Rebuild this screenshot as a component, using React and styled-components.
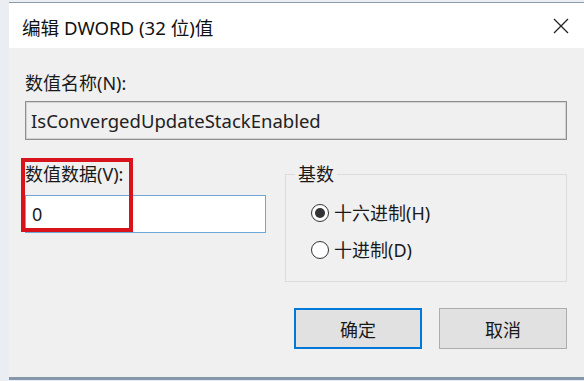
import React from "react";
import styled, { createGlobalStyle } from "styled-components";

const GlobalStyle = createGlobalStyle`
  html, body {
    margin: 0;
    padding: 0;
  }
  body {
    background: #eaeef2;
    font-family: "Noto Sans", "Noto Sans CJK SC", sans-serif;
    font-size: 18px;
    color: #1a1a1a;
    overflow: hidden;
  }
`;

const Window = styled.div`
  margin: 2px 0 0 9px;
  background: #f0f0f0;
  border-top: 1px solid #8e9cae;
  border-bottom: 3px solid #8797ab;
`;

const TitleBar = styled.div`
  height: 45px;
  background: #fff;
  display: flex;
  align-items: center;
  justify-content: space-between;
  padding: 0 15px 0 13px;
`;

const Title = styled.div`
  white-space: nowrap;
  color: #111;
  font-size: 18.6px;
  padding-top: 2px;
`;

const CloseButton = styled.span`
  display: flex;
  width: 16px;
  height: 16px;
`;

const Body = styled.div`
  padding: 23px 17px 28px 16px;
`;

const Label = styled.div`
  height: 24px;
  line-height: 24px;
  white-space: nowrap;
`;

const ReadOnlyField = styled.div`
  margin-top: 6px;
  height: 39px;
  box-sizing: border-box;
  border: 1px solid #8f8f8f;
  box-shadow: inset 0 0 0 1px #d2d2d2;
  background: #f0f0f0;
  padding: 0 5px;
  display: flex;
  align-items: center;
  color: #222;
  font-size: 18.5px;
`;

const DataRow = styled.div`
  margin-top: 22px;
  display: grid;
  grid-template-columns: 241px 282px;
  column-gap: 19px;
  align-items: start;
`;

const ValueColumn = styled.div`
  position: relative;
`;

const ValueInput = styled.input`
  display: block;
  margin-top: 9px;
  width: 100%;
  height: 38px;
  box-sizing: border-box;
  border: 1px solid #6ea6d8;
  background: #fff;
  padding: 0 6px;
  font: inherit;
  color: #1a1a1a;
  outline: none;
`;

const Highlight = styled.div`
  position: absolute;
  left: -4px;
  top: -4px;
  width: 112px;
  height: 74px;
  box-sizing: border-box;
  border: 4px solid #d8131c;
  pointer-events: none;
`;

const RadixGroup = styled.fieldset`
  margin: 0;
  padding: 0;
  min-width: 0;
  border: 1px solid #dcdcdc;
`;

const Legend = styled.legend`
  margin-left: 9px;
  padding: 0 3px;
  line-height: 24px;
`;

const OptionList = styled.div`
  display: flex;
  flex-direction: column;
  gap: 13px;
  padding: 15px 0 19px 25px;
`;

const RadioOption = styled.label`
  display: flex;
  align-items: center;
  gap: 5px;
  line-height: 24px;
  white-space: nowrap;
`;

const RadioMark = styled.span`
  width: 18px;
  height: 18px;
  box-sizing: border-box;
  border: 1px solid #333;
  border-radius: 50%;
  background: #fff;
  display: flex;
  align-items: center;
  justify-content: center;

  &::after {
    content: "";
    width: 10px;
    height: 10px;
    border-radius: 50%;
    background: #333;
    display: ${(p) => (p.$checked ? "block" : "none")};
  }
`;

const ButtonRow = styled.div`
  margin-top: 26px;
  display: flex;
  justify-content: flex-end;
  gap: 17px;
`;

const DialogButton = styled.button`
  width: 128px;
  height: 41px;
  box-sizing: border-box;
  background: #e1e1e1;
  border: ${(p) => (p.$primary ? "2px solid #0078d7" : "1px solid #adadad")};
  padding: 0;
  font: inherit;
  color: #1a1a1a;
`;

const options = [
  { label: "十六进制(H)", checked: true },
  { label: "十进制(D)", checked: false },
];

const App = () => {
  return (
    <>
      <GlobalStyle />
      <Window>
        <TitleBar>
          <Title>编辑 DWORD (32 位)值</Title>
          <CloseButton>
            <svg width="16" height="16" viewBox="0 0 16 16">
              <path d="M1 1 L15 15 M15 1 L1 15" stroke="#222" strokeWidth="1.3" fill="none" />
            </svg>
          </CloseButton>
        </TitleBar>
        <Body>
          <Label>数值名称(N):</Label>
          <ReadOnlyField>IsConvergedUpdateStackEnabled</ReadOnlyField>
          <DataRow>
            <ValueColumn>
              <Label>数值数据(V):</Label>
              <ValueInput value="0" readOnly />
              <Highlight />
            </ValueColumn>
            <RadixGroup>
              <Legend>基数</Legend>
              <OptionList>
                {options.map((o) => (
                  <RadioOption key={o.label}>
                    <RadioMark $checked={o.checked} />
                    {o.label}
                  </RadioOption>
                ))}
              </OptionList>
            </RadixGroup>
          </DataRow>
          <ButtonRow>
            <DialogButton $primary>确定</DialogButton>
            <DialogButton>取消</DialogButton>
          </ButtonRow>
        </Body>
      </Window>
    </>
  );
};

export default App;
